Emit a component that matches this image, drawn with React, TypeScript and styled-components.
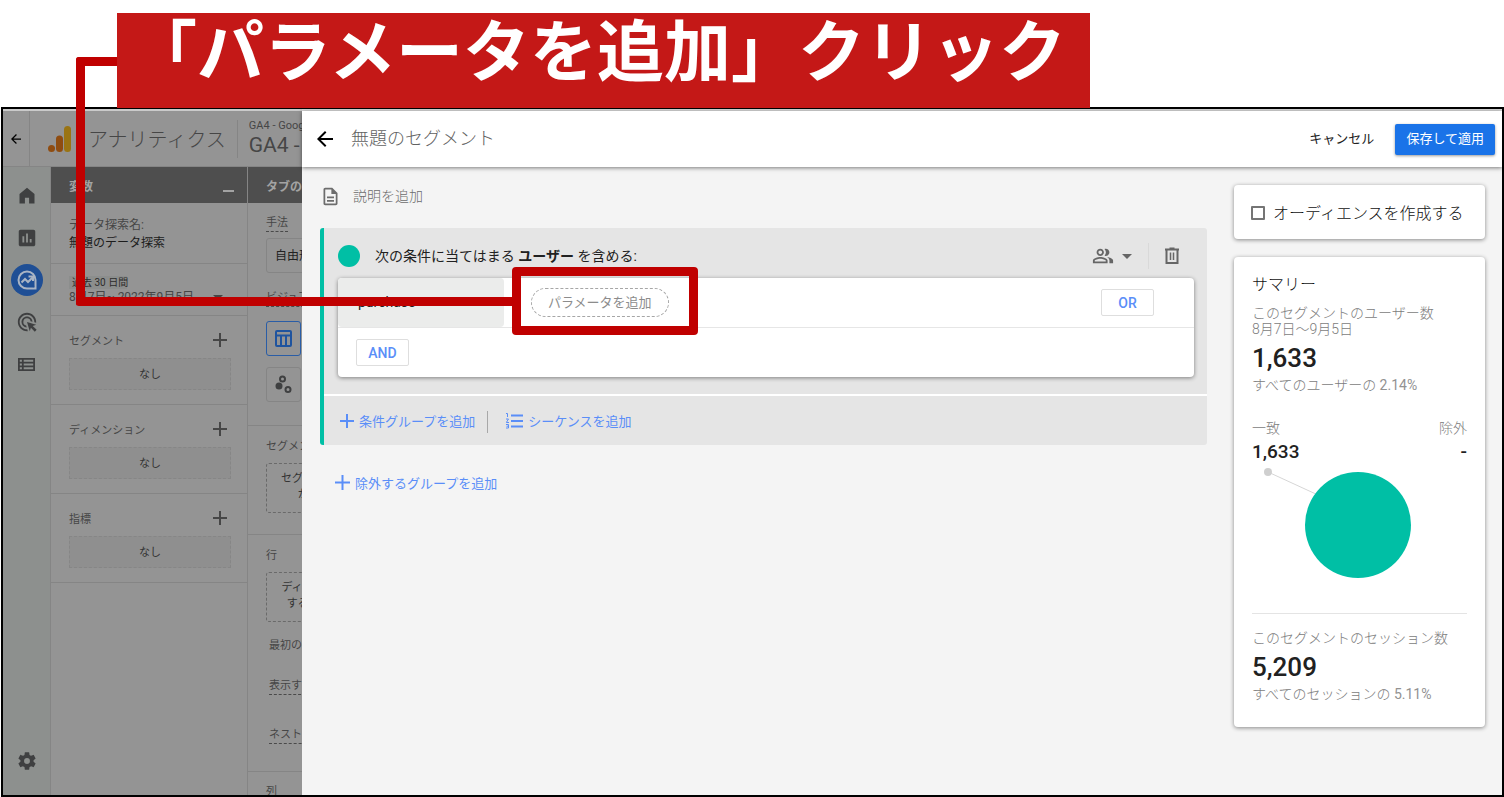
import React from "react";
import styled, { createGlobalStyle } from "styled-components";

const GlobalStyle = createGlobalStyle`
  *, *::before, *::after { box-sizing: border-box; }
  body {
    margin: 0;
    background: #fff;
    font-family: Roboto, "Noto Sans CJK JP", sans-serif;
    font-size: 13px;
    color: #212121;
  }
  button, input { font: inherit; }
  button { cursor: pointer; }
  svg { display: block; flex: none; }
`;

const teal = "#00bfa5";
const link = "#5a8ef8";
const dimBg = "#949494";
const dimLine = "#858585";
const dimText = "#464646";

const Page = styled.div`
  position: relative;
  display: flex;
  flex-direction: column;
  height: 100vh;
  padding: 13px 0 0;
  overflow: hidden;
`;

const Banner = styled.h1`
  position: relative;
  z-index: 1;
  align-self: flex-start;
  flex: none;
  height: 95px;
  margin: 0 0 -1px 117px;
  padding: 0 24px 0 13px;
  background: #c41817;
  color: #fff;
  font-size: 67px;
  font-weight: 700;
  line-height: 80px;
  white-space: nowrap;
`;

const Frame = styled.div`
  flex: 1;
  display: flex;
  min-height: 0;
  margin: 0 0 0 1px;
  border: 2px solid #000;
  overflow: hidden;
`;

/* Dimmed application behind the drawer */
const Backdrop = styled.div`
  flex: none;
  display: flex;
  flex-direction: column;
  width: 299px;
  background: ${dimBg};
  color: ${dimText};
  border-top: 2px solid #cacaca;
  overflow: hidden;
  white-space: nowrap;
`;

const AppHeader = styled.header`
  flex: none;
  display: flex;
  align-items: center;
  height: 56px;
  border-bottom: 1px solid ${dimLine};
`;

const BackCell = styled.button`
  flex: none;
  display: flex;
  align-items: center;
  justify-content: center;
  width: 27px;
  height: 100%;
  padding: 0;
  border: 0;
  border-right: 1px solid ${dimLine};
  background: none;
  color: #000;
`;

const Brand = styled.div`
  flex: none;
  display: flex;
  align-items: center;
  gap: 17px;
  margin-left: 18px;
  font-size: 20px;
  font-weight: 300;
`;

const Account = styled.div`
  flex: none;
  display: flex;
  flex-direction: column;
  margin-left: 11px;
  padding-left: 11px;
  border-left: 1px solid ${dimLine};
  font-size: 11px;
  line-height: 12px;
`;

const AccountName = styled.span`
  font-size: 21px;
  line-height: 26px;
`;

const AppBody = styled.div`
  flex: 1;
  display: flex;
  min-height: 0;
`;

const Rail = styled.nav`
  flex: none;
  display: flex;
  flex-direction: column;
  align-items: center;
  gap: 10px;
  width: 48px;
  padding: 13px 0 18px;
  background: #8d908e;
  border-right: 1px solid ${dimLine};
`;

const RailButton = styled.button<{ $active?: boolean; $last?: boolean }>`
  display: flex;
  align-items: center;
  justify-content: center;
  width: 32px;
  height: 32px;
  padding: 0;
  border: 0;
  border-radius: 50%;
  background: ${(p) => (p.$active ? "#1f4f95" : "none")};
  color: ${(p) => (p.$active ? "#a9b4c4" : "#3f4041")};
  margin-top: ${(p) => (p.$last ? "auto" : "0")};
`;

const Column = styled.section<{ $width: number }>`
  flex: none;
  width: ${(p) => p.$width}px;
  border-right: 1px solid ${dimLine};
`;

const ColumnHead = styled.div`
  display: flex;
  align-items: center;
  justify-content: space-between;
  height: 36px;
  padding: 0 13px 0 18px;
  background: #4e4e4e;
  color: #a3a3a3;
  font-size: 12px;
  font-weight: 700;
`;

const Minus = styled.span`
  width: 11px;
  height: 2px;
  margin-top: 12px;
  background: #a3a3a3;
`;

const NameBlock = styled.div`
  height: 61px;
  padding: 13px 18px 0;
  border-bottom: 1px solid ${dimLine};
  font-size: 12px;
  line-height: 18px;
`;

const Strong = styled.div`
  color: #1c1c1c;
`;

const DateBlock = styled.div`
  height: 52px;
  padding: 12px 18px 0;
  border-bottom: 1px solid ${dimLine};
  font-size: 12px;
  line-height: 16px;
`;

const DateChip = styled.span`
  display: block;
  width: 58px;
  padding: 0 3px;
  background: #8c8e8d;
  color: #2c2c2c;
  font-size: 10px;
  line-height: 13px;
`;

const DateRow = styled.div`
  display: flex;
  align-items: center;
  justify-content: space-between;
  padding-right: 6px;
`;

const VariableBlock = styled.div`
  height: 89px;
  padding: 13px 16px 0 18px;
  border-bottom: 1px solid ${dimLine};
  font-size: 11px;
`;

const VariableHead = styled.div`
  display: flex;
  align-items: center;
  justify-content: space-between;
  height: 21px;
  padding-right: 4px;
`;

const EmptyBox = styled.div`
  display: flex;
  align-items: center;
  justify-content: center;
  height: 32px;
  margin-top: 8px;
  padding-bottom: 2px;
  border: 1px dashed #868686;
  background: #8f8f8f;
  color: #333;
`;

const TabBlock = styled.div<{ $top?: number; $bottom?: number }>`
  padding: ${(p) => p.$top ?? 13}px 18px ${(p) => p.$bottom ?? 21}px;
  border-bottom: 1px solid ${dimLine};
  font-size: 11px;
  line-height: 16px;
`;

const Label = styled.div<{ $dotted?: boolean; $top?: number; $indent?: number }>`
  width: fit-content;
  height: 17px;
  margin-top: ${(p) => p.$top ?? 0}px;
  margin-left: ${(p) => p.$indent ?? 0}px;
  border-bottom: 1px dashed ${(p) => (p.$dotted ? "#4a4a4a" : "transparent")};
`;

const Technique = styled.button`
  display: block;
  width: 162px;
  height: 35px;
  margin: 6px 0 0;
  padding: 0 8px;
  border: 1px solid ${dimLine};
  border-radius: 3px;
  background: none;
  color: #222;
  font-size: 12px;
  text-align: left;
`;

const VizButton = styled.button<{ $active?: boolean }>`
  display: flex;
  align-items: center;
  justify-content: center;
  width: 35px;
  height: 35px;
  margin-top: ${(p) => (p.$active ? 14 : 11)}px;
  padding: 0;
  border: 1px solid ${(p) => (p.$active ? "#2a5da6" : dimLine)};
  border-radius: 3px;
  background: none;
  color: ${(p) => (p.$active ? "#1f549f" : "#3f4041")};
`;

const DropZone = styled.div`
  width: 162px;
  height: 50px;
  margin-top: 7px;
  padding-top: 7px;
  border: 1px dashed #6a6a6a;
  border-radius: 3px;
  color: #333;
  text-align: center;
`;

/* Drawer */
const Drawer = styled.div`
  flex: 1;
  display: flex;
  flex-direction: column;
  min-width: 0;
  border-top: 2px solid #d8d8d8;
  background: #f4f4f4;
`;

const DrawerHeader = styled.header`
  position: relative;
  flex: none;
  display: flex;
  align-items: center;
  height: 56px;
  padding: 0 7px 0 15px;
  background: #fff;
  box-shadow: 0 1px 4px rgba(0, 0, 0, 0.5);
`;

const IconButton = styled.button<{ $dark?: boolean }>`
  display: flex;
  align-items: center;
  justify-content: center;
  padding: 0;
  border: 0;
  background: none;
  color: ${(p) => (p.$dark ? "#000" : "#666")};
`;

const DrawerTitle = styled.h2`
  flex: 1;
  margin: 0 0 0 18px;
  color: #616161;
  font-size: 18px;
  font-weight: 300;
  line-height: 24px;
`;

const CancelButton = styled.button`
  margin-right: 21px;
  padding: 0 0 3px;
  border: 0;
  background: none;
  color: #212121;
`;

const SaveButton = styled.button`
  height: 31px;
  padding: 0 11px 3px;
  border: 0;
  border-radius: 2px;
  background: #1a73e8;
  color: #fff;
  box-shadow: 0 1px 3px rgba(0, 0, 0, 0.4);
`;

const DrawerBody = styled.div`
  flex: 1;
  display: flex;
  align-items: flex-start;
  gap: 27px;
  padding: 18px 17px 0 18px;
`;

const Builder = styled.main`
  flex: 1;
  min-width: 0;
`;

const Description = styled.button`
  display: flex;
  align-items: center;
  gap: 12px;
  height: 23px;
  padding: 0;
  border: 0;
  background: none;
  color: #6c6c6c;
  font-size: 14px;
  font-weight: 300;
`;

const DescriptionText = styled.span`
  padding-bottom: 3px;
`;

const Group = styled.section`
  margin-top: 20px;
  border-left: 4px solid ${teal};
  border-radius: 3px;
  background: #e5e5e5;
`;

const GroupHead = styled.div`
  display: flex;
  align-items: center;
  height: 50px;
  padding: 6px 25px 0 14px;
  font-size: 14px;
`;

const Dot = styled.span`
  width: 22px;
  height: 22px;
  border-radius: 50%;
  background: ${teal};
`;

const GroupText = styled.span`
  flex: 1;
  margin-left: 15px;
  padding-bottom: 2px;
`;

const Scope = styled(IconButton)`
  gap: 8px;
  margin-right: 16px;
`;

const Trash = styled(IconButton)`
  height: 26px;
  padding-left: 13px;
  border-left: 1px solid #d9d9d9;
`;

const Card = styled.div`
  margin: 0 13px 0 14px;
  border-radius: 4px;
  background: #fff;
  box-shadow: 0 1px 4px rgba(0, 0, 0, 0.45);
`;

const ConditionRow = styled.div`
  display: flex;
  align-items: center;
  height: 50px;
  padding-right: 40px;
  border-bottom: 1px solid #e6e6e6;
`;

const EventChip = styled.button`
  width: 166px;
  height: 49px;
  padding: 0 20px 2px;
  border: 0;
  border-radius: 4px;
  background: #ebeceb;
  color: #212121;
  font-size: 14px;
  text-align: left;
`;

const ParamButton = styled.button`
  height: 29px;
  margin: 0 auto 0 27px;
  padding: 0 16px 2px;
  border: 1px dashed #a6a6a6;
  border-radius: 15px;
  background: #fff;
  color: #8c8c8c;
`;

const LogicButton = styled.button`
  width: 53px;
  height: 27px;
  padding: 0;
  border: 1px solid #dedede;
  border-radius: 2px;
  background: #fff;
  color: ${link};
  font-size: 14px;
  font-weight: 500;
`;

const AndRow = styled.div`
  display: flex;
  align-items: center;
  height: 49px;
  padding-left: 18px;
`;

const GroupFoot = styled.div`
  display: flex;
  align-items: center;
  height: 51px;
  margin-top: 17px;
  padding-left: 16px;
  border-top: 2px solid #fff;
`;

const LinkButton = styled.button`
  display: flex;
  align-items: center;
  gap: 5px;
  padding: 0;
  border: 0;
  background: none;
  color: ${link};
`;

const FootDivider = styled.span`
  width: 1px;
  height: 22px;
  margin: 3px 18px 0 12px;
  background: #a8a8a8;
`;

const Exclude = styled.div`
  padding: 28px 0 0 15px;
`;

const Side = styled.aside`
  flex: none;
  display: flex;
  flex-direction: column;
  gap: 18px;
  width: 251px;
`;

const Panel = styled.section`
  border-radius: 4px;
  background: #fff;
  box-shadow: 0 1px 4px rgba(0, 0, 0, 0.45);
`;

const CheckLabel = styled.label`
  display: flex;
  align-items: center;
  gap: 8px;
  height: 54px;
  padding: 0 17px;
  color: #111;
  font-size: 16px;
  font-weight: 300;
  white-space: nowrap;
`;

const CheckBox = styled.input`
  appearance: none;
  flex: none;
  width: 14px;
  height: 14px;
  margin: 2px 0 0;
  border: 2px solid #757575;
  border-radius: 1px;
`;

const Summary = styled(Panel)`
  display: flex;
  flex-direction: column;
  height: 470px;
  padding: 16px 18px 0;
`;

const SummaryTitle = styled.h3`
  margin: 0 0 8px;
  color: #111;
  font-size: 16px;
  font-weight: 300;
  line-height: 24px;
`;

const Muted = styled.div`
  color: #7c7c7c;
  font-size: 14px;
  font-weight: 300;
  line-height: 16px;
  white-space: nowrap;
`;

const Figure = styled.span`
  color: #929292;
  font-weight: 400;
`;

const Big = styled.div`
  height: 40px;
  padding-top: 5px;
  font-size: 26px;
  font-weight: 500;
  line-height: 32px;
`;

const Split = styled.div`
  display: flex;
  justify-content: space-between;
  margin-top: 27px;
`;

const SplitValue = styled.div<{ $right?: boolean }>`
  font-size: 19px;
  font-weight: 500;
  line-height: 32px;
  text-align: ${(p) => (p.$right ? "right" : "left")};
`;

const Rule = styled.hr`
  width: 100%;
  margin: 34px 0 16px;
  border: 0;
  border-top: 1px solid #e4e4e4;
`;

/* Call-out drawn over the screen */
const CalloutLine = styled.div`
  position: absolute;
  top: 57px;
  left: 76px;
  width: 437px;
  height: 249px;
  border: 9px solid #c00000;
  border-width: 0 0 9px 9px;
  border-radius: 3px 0 0 3px;
  pointer-events: none;
`;

const CalloutStart = styled.div`
  position: absolute;
  top: 57px;
  left: 76px;
  width: 41px;
  height: 9px;
  border-radius: 3px 0 0 0;
  background: #c00000;
`;

const CalloutBox = styled.div`
  position: absolute;
  top: 267px;
  left: 512px;
  width: 186px;
  height: 68px;
  border: 9px solid #c00000;
  border-radius: 4px;
  pointer-events: none;
`;

const Arrow = ({ size }: { size: number }) => (
  <svg width={size} height={size} viewBox="4 4 16 16" fill="currentColor">
    <path d="M20 11H7.83l5.59-5.59L12 4l-8 8 8 8 1.41-1.41L7.83 13H20z" />
  </svg>
);

const Plus = ({ size, weight }: { size: number; weight: number }) => (
  <svg width={size} height={size} viewBox={`0 0 ${size} ${size}`} stroke="currentColor" strokeWidth={weight}>
    <path d={`M${size / 2} 0V${size}M0 ${size / 2}H${size}`} />
  </svg>
);

const Caret = () => (
  <svg width="10" height="5" viewBox="0 0 10 5" fill="currentColor">
    <path d="M0 0h10L5 5z" />
  </svg>
);

const Icon = ({ size, children }: { size: number; children: React.ReactNode }) => (
  <svg width={size} height={size} viewBox="0 0 24 24" fill="currentColor">
    {children}
  </svg>
);

const variables = ["セグメント", "ディメンション", "指標"];

export default function App() {
  return (
    <Page>
      <GlobalStyle />
      <Banner>「パラメータを追加」クリック</Banner>
      <Frame>
        <Backdrop>
          <AppHeader>
            <BackCell aria-label="戻る">
              <Arrow size={10} />
            </BackCell>
            <Brand>
              <svg width="23" height="28" viewBox="0 0 23 28">
                <rect x="16" y="1" width="7" height="26" rx="3.500" fill="#9a7413" />
                <rect x="8" y="10.500" width="7" height="16.500" rx="3.500" fill="#8f4c10" />
                <circle cx="3.500" cy="23.500" r="3.500" fill="#8f4c10" />
              </svg>
              アナリティクス
            </Brand>
            <Account>
              GA4 - Google
              <AccountName>GA4 - Google</AccountName>
            </Account>
          </AppHeader>
          <AppBody>
            <Rail>
              <RailButton aria-label="ホーム">
                <Icon size={20}>
                  <path d="M3 21V9.500L12 2l9 7.500V21h-6.500v-7h-5v7z" />
                </Icon>
              </RailButton>
              <RailButton aria-label="レポート">
                <Icon size={22}>
                  <path d="M19 3H5c-1.100 0-2 .9-2 2v14c0 1.100.9 2 2 2h14c1.100 0 2-.9 2-2V5c0-1.100-.9-2-2-2zM9 17H7v-7h2v7zm4 0h-2V7h2v10zm4 0h-2v-4h2v4z" />
                </Icon>
              </RailButton>
              <RailButton aria-label="探索" $active>
                <svg width="22" height="22" viewBox="0 0 22 22" fill="none" stroke="currentColor" strokeWidth="2">
                  <path d="M19.500 19.500H11A8.500 8.500 0 1 1 19.500 11z" />
                  <path d="M5.500 13.500l3.500-3.500 3 3 4.500-4.500" />
                  <path d="M12.500 7.500h4.500v4.500" />
                  <circle cx="17.300" cy="17.300" r="1" fill="#1f4f95" stroke="none" />
                </svg>
              </RailButton>
              <RailButton aria-label="広告">
                <Icon size={22}>
                  <path d="M11.710 17.990A5.993 5.993 0 0 1 6 12c0-3.310 2.690-6 6-6 3.220 0 5.840 2.530 5.990 5.710l-2.100-.63a3.999 3.999 0 1 0-4.810 4.810l.63 2.100zM22 12c0 .3-.01.6-.04.9l-1.970-.59c.01-.1.010-.21.010-.31 0-4.420-3.580-8-8-8s-8 3.580-8 8 3.580 8 8 8c.1 0 .21 0 .31-.01l.59 1.970c-.3.030-.6.040-.9.040-5.520 0-10-4.480-10-10S6.480 2 12 2s10 4.480 10 10zm-3.770 4.260L22 15l-10-3 3 10 1.260-3.770 4.270 4.270 1.980-1.980-4.280-4.260z" />
                </Icon>
              </RailButton>
              <RailButton aria-label="構成">
                <svg width="17" height="13" viewBox="0 0 17 13" fill="none" stroke="currentColor" strokeWidth="1.800">
                  <path d="M.9.9h15.200v11.200H.9zM.9 4.600h15.200M.9 8.400h15.200M4.800.9v11.200" />
                </svg>
              </RailButton>
              <RailButton aria-label="管理" $last>
                <Icon size={22}>
                  <path d="M19.140 12.940c.04-.3.060-.61.060-.94 0-.32-.02-.64-.07-.94l2.030-1.580a.49.49 0 0 0 .12-.61l-1.920-3.320a.488.488 0 0 0-.59-.22l-2.390.96c-.5-.38-1.030-.7-1.620-.94l-.36-2.540a.484.484 0 0 0-.48-.41h-3.840c-.24 0-.43.17-.47.41l-.36 2.540c-.59.24-1.130.57-1.620.94l-2.390-.96c-.22-.08-.47 0-.59.22L2.740 8.870c-.12.21-.08.47.12.61l2.030 1.580c-.05.3-.09.63-.09.94s.02.64.07.94l-2.030 1.580a.49.49 0 0 0-.12.61l1.920 3.320c.12.22.37.29.59.22l2.390-.96c.5.38 1.030.7 1.620.94l.36 2.540c.05.24.24.41.48.41h3.840c.24 0 .44-.17.47-.41l.36-2.540c.59-.24 1.130-.56 1.620-.94l2.390.96c.22.080.47 0 .59-.22l1.920-3.320c.12-.22.070-.47-.12-.61l-2.010-1.580zM12 15.200A3.200 3.200 0 1 1 12 8.800a3.200 3.200 0 0 1 0 6.400z" />
                </Icon>
              </RailButton>
            </Rail>
            <Column $width={197}>
              <ColumnHead>
                変数
                <Minus />
              </ColumnHead>
              <NameBlock>
                データ探索名:
                <Strong>無題のデータ探索</Strong>
              </NameBlock>
              <DateBlock>
                <DateChip>過去 30 日間</DateChip>
                <DateRow>
                  8月7日~ 2022年9月5日
                  <Caret />
                </DateRow>
              </DateBlock>
              {variables.map((name) => (
                <VariableBlock key={name}>
                  <VariableHead>
                    {name}
                    <Plus size={14} weight={2} />
                  </VariableHead>
                  <EmptyBox>なし</EmptyBox>
                </VariableBlock>
              ))}
            </Column>
            <Column $width={198}>
              <ColumnHead>タブの設定</ColumnHead>
              <TabBlock $top={12} $bottom={23}>
                <Label $dotted>手法</Label>
                <Technique>自由形式</Technique>
                <Label $dotted $top={17}>ビジュアリゼーション</Label>
                <VizButton $active aria-label="表">
                  <svg width="17" height="17" viewBox="0 0 17 17" fill="none" stroke="currentColor" strokeWidth="2">
                    <rect x="1" y="1" width="15" height="15" rx="1" />
                    <path d="M1 5.500h15M6 5.500V16M11 5.500V16" />
                  </svg>
                </VizButton>
                <VizButton aria-label="散布図">
                  <svg width="17" height="19" viewBox="0 0 17 19" fill="none" stroke="currentColor" strokeWidth="2">
                    <circle cx="4" cy="11" r="3.500" fill="currentColor" stroke="none" />
                    <circle cx="7.500" cy="4" r="2.500" />
                    <circle cx="13" cy="14.500" r="2.500" />
                  </svg>
                </VizButton>
              </TabBlock>
              <TabBlock>
                <Label>セグメントの比較</Label>
                <DropZone>
                  セグメントをドロップする
                  <br />
                  か選択してください
                </DropZone>
              </TabBlock>
              <TabBlock $bottom={27}>
                <Label>行</Label>
                <DropZone>
                  ディメンションをドロップ
                  <br />
                  するか選択してください
                </DropZone>
                <Label $top={16} $indent={3}>最初の行</Label>
                <Label $dotted $top={23} $indent={3}>表示する行数</Label>
                <Label $dotted $top={32} $indent={3}>ネストされた行</Label>
              </TabBlock>
              <TabBlock $top={12}>
                <Label>列</Label>
              </TabBlock>
            </Column>
          </AppBody>
        </Backdrop>

        <Drawer>
          <DrawerHeader>
            <IconButton $dark aria-label="閉じる">
              <Arrow size={16} />
            </IconButton>
            <DrawerTitle>無題のセグメント</DrawerTitle>
            <CancelButton>キャンセル</CancelButton>
            <SaveButton>保存して適用</SaveButton>
          </DrawerHeader>
          <DrawerBody>
            <Builder>
              <Description>
                <Icon size={21}>
                  <path d="M8 16h8v2H8zm0-4h8v2H8zm6-10H6c-1.100 0-2 .9-2 2v16c0 1.100.89 2 1.990 2H18c1.100 0 2-.9 2-2V8l-6-6zm4 18H6V4h7v5h5v11z" />
                </Icon>
                <DescriptionText>説明を追加</DescriptionText>
              </Description>
              <Group>
                <GroupHead>
                  <Dot />
                  <GroupText>
                    次の条件に当てはまる <b>ユーザー</b> を含める:
                  </GroupText>
                  <Scope aria-label="スコープ">
                    <Icon size={22}>
                      <path d="M16.500 13.130c1.370.93 2.500 2.180 2.500 3.870v3h4v-3c0-2.180-3.570-3.470-6.500-3.870zM15 12c2.210 0 4-1.790 4-4s-1.790-4-4-4c-.47 0-.91.1-1.330.24a5.980 5.980 0 0 1 0 7.520c.42.140.86.240 1.330.240zM9 12c2.210 0 4-1.790 4-4s-1.790-4-4-4-4 1.790-4 4 1.790 4 4 4zm0-6c1.100 0 2 .9 2 2s-.9 2-2 2-2-.9-2-2 .9-2 2-2zm0 7c-2.670 0-8 1.340-8 4v3h16v-3c0-2.660-5.330-4-8-4zm6 5H3v-.99C3.200 16.290 6.300 15 9 15s5.800 1.290 6 2v1z" />
                    </Icon>
                    <Caret />
                  </Scope>
                  <Trash aria-label="削除">
                    <svg width="20" height="20" viewBox="0 0 20 20" fill="none" stroke="currentColor" strokeWidth="2">
                      <path d="M3 3.500h14M7.500 2.500h5M4.500 3.500V17h11V3.500" />
                      <path d="M8.500 6.500v7.500M11.500 6.500v7.500" strokeWidth="1.500" />
                    </svg>
                  </Trash>
                </GroupHead>
                <Card>
                  <ConditionRow>
                    <EventChip>purchase</EventChip>
                    <ParamButton>パラメータを追加</ParamButton>
                    <LogicButton>OR</LogicButton>
                  </ConditionRow>
                  <AndRow>
                    <LogicButton>AND</LogicButton>
                  </AndRow>
                </Card>
                <GroupFoot>
                  <LinkButton>
                    <Plus size={14} weight={2} />
                    条件グループを追加
                  </LinkButton>
                  <FootDivider />
                  <LinkButton>
                    <svg width="17" height="16" viewBox="0 0 17 16" fill="none" stroke="currentColor">
                      <path d="M5 2.500h12M5 8h12M5 13.500h12" strokeWidth="2" />
                      <path d="M0 .5h1.500V4M0 6h2.500L.3 9.500H3M0 11.500h2.500v3.500H0M.5 13.200h2" strokeWidth="1" />
                    </svg>
                    シーケンスを追加
                  </LinkButton>
                </GroupFoot>
              </Group>
              <Exclude>
                <LinkButton>
                  <Plus size={15} weight={2} />
                  除外するグループを追加
                </LinkButton>
              </Exclude>
            </Builder>
            <Side>
              <Panel>
                <CheckLabel>
                  <CheckBox type="checkbox" />
                  オーディエンスを作成する
                </CheckLabel>
              </Panel>
              <Summary>
                <SummaryTitle>サマリー</SummaryTitle>
                <Muted>このセグメントのユーザー数</Muted>
                <Muted>8月7日～9月5日</Muted>
                <Big>1,633</Big>
                <Muted>
                  すべてのユーザーの <Figure>2.14%</Figure>
                </Muted>
                <Split>
                  <div>
                    <Muted>一致</Muted>
                    <SplitValue>1,633</SplitValue>
                  </div>
                  <div>
                    <Muted>除外</Muted>
                    <SplitValue $right>-</SplitValue>
                  </div>
                </Split>
                <svg width="215" height="111" viewBox="0 0 215 111">
                  <path d="M16 4L66 27" stroke="#d6d6d6" />
                  <circle cx="16" cy="4" r="4" fill="#cfcfcf" />
                  <circle cx="106" cy="57" r="53" fill={teal} />
                </svg>
                <Rule />
                <Muted>このセグメントのセッション数</Muted>
                <Big>5,209</Big>
                <Muted>
                  すべてのセッションの <Figure>5.11%</Figure>
                </Muted>
              </Summary>
            </Side>
          </DrawerBody>
        </Drawer>
      </Frame>
      <CalloutLine />
      <CalloutStart />
      <CalloutBox />
    </Page>
  );
}
